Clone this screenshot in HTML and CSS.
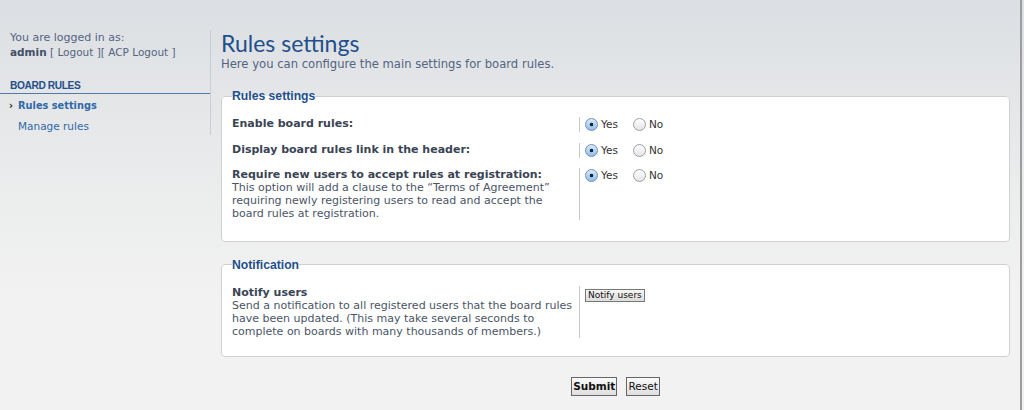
FILE: index.html
```html
<!DOCTYPE html>
<html>

<head>
    <title> Rules settings </title>
    <link rel="stylesheet" href="styles.css">
</head>

<body>
    <div id="pagina">
        <div id="meniu">
            <p class="logat"><span class="prima">You are logged in as:</span><br><b>admin</b> [ <a href="#">Logout</a> ][ <a href="#">ACP Logout</a> ]</p>

            <div class="titluMeniu">BOARD RULES</div>
            <ul class="listaMeniu">
                <li class="activ"><a href="#">Rules settings</a></li>
                <li><a href="#">Manage rules</a></li>
            </ul>
        </div>

        <div id="continut">
            <h1>Rules settings</h1>
            <p class="explicatie">Here you can configure the main settings for board rules.</p>

            <form>
                <fieldset>
                    <legend>Rules settings</legend>
                    <dl>
                        <dt><label>Enable board rules:</label></dt>
                        <dd>
                            <label class="optiune"><input type="radio" name="r1" checked> Yes</label>
                            <label class="optiune"><input type="radio" name="r1"> No</label>
                        </dd>
                    </dl>
                    <dl>
                        <dt><label>Display board rules link in the header:</label></dt>
                        <dd>
                            <label class="optiune"><input type="radio" name="r2" checked> Yes</label>
                            <label class="optiune"><input type="radio" name="r2"> No</label>
                        </dd>
                    </dl>
                    <dl>
                        <dt><label>Require new users to accept rules at registration:</label><br>
                            <span>This option will add a clause to the “Terms of Agreement” requiring newly registering users to read and accept the board rules at registration.</span></dt>
                        <dd>
                            <label class="optiune"><input type="radio" name="r3" checked> Yes</label>
                            <label class="optiune"><input type="radio" name="r3"> No</label>
                        </dd>
                    </dl>
                </fieldset>

                <fieldset class="notificare">
                    <legend>Notification</legend>
                    <dl>
                        <dt><label>Notify users</label><br>
                            <span>Send a notification to all registered users that the board rules have been updated. (This may take several seconds to complete on boards with many thousands of members.)</span></dt>
                        <dd><button type="button" class="butonMic">Notify users</button></dd>
                    </dl>
                </fieldset>

                <div class="trimite">
                    <button type="button" class="buton butonGros">Submit</button>
                    <button type="button" class="buton">Reset</button>
                </div>
            </form>
        </div>
    </div>
</body>

</html>
```

FILE: styles.css
```css
html {
    font-family: "DejaVu Sans", Verdana, sans-serif;
}

body {
    margin: 0px;
    background: linear-gradient(#dcdfe3 0px, #eceded 200px, #f2f2f2 300px);
    height: 410px;
    overflow: hidden;
}

a {
    color: #2f6aa6;
    text-decoration: none;
}

#pagina {
    display: flex;
    width: 1020px;
    height: 410px;
    border-right: 2px solid #9d9d9d;
}

#meniu {
    width: 210px;
    height: 105px;
    margin-top: 30px;
    border-right: 1px solid #c8cdd3;
    font-size: 10.5px;
    color: #536482;
}

.logat {
    margin: 0px 0px 0px 10px;
    line-height: 15px;
}

.logat .prima {
    font-size: 11px;
}

.logat b {
    color: #425067;
}

.logat a {
    color: #536482;
}

.titluMeniu {
    margin-top: 19px;
    padding: 0px 0px 1px 10px;
    font-family: "Liberation Sans", Arial, sans-serif;
    font-weight: bold;
    font-size: 10.2px;
    letter-spacing: -0.4px;
    line-height: 13px;
    color: #1f4f8c;
    border-bottom: 1px solid #4e7bab;
}

.listaMeniu {
    list-style: none;
    margin: 2px 0px 0px 0px;
    padding: 0px;
}

.listaMeniu li {
    padding-left: 18px;
    line-height: 20px;
}

.listaMeniu .activ {
    font-weight: bold;
    font-size: 9.8px;
    position: relative;
}

.listaMeniu .activ::before {
    content: "›";
    position: absolute;
    left: 9px;
    color: #222;
}

#continut {
    flex: 1;
    padding: 30px 10px 0px 10px;
}

h1 {
    margin: 0px;
    font-family: Lato, "Liberation Sans", sans-serif;
    font-size: 23px;
    font-weight: normal;
    line-height: 27px;
    color: #1f4f8c;
}

.explicatie {
    margin: 0px;
    font-size: 11.6px;
    line-height: 14px;
    color: #536482;
}

fieldset {
    margin: 18px 0px 0px 0px;
    padding: 14px 10px 10px 10px;
    background-color: white;
    border: 1px solid #d0d0d0;
    border-radius: 4px;
}

fieldset + fieldset {
    margin-top: 16px;
}

.notificare {
    padding-bottom: 8px;
}

legend {
    padding: 0px;
    font-family: "Liberation Sans", Arial, sans-serif;
    font-weight: bold;
    font-size: 12.2px;
    color: #1f4f8c;
}

dl {
    display: flex;
    margin: 0px 0px 10.5px 0px;
    font-size: 11px;
    line-height: 13px;
}

dt {
    width: 343px;
    padding-right: 4px;
    color: #4a5566;
}

dt label {
    font-weight: bold;
    color: #3a4454;
}

dd {
    margin: 0px;
    padding: 1px 0px 1px 5px;
    border-left: 1px solid #c8c8c8;
    display: flex;
    align-items: flex-start;
}

.optiune {
    display: flex;
    align-items: center;
    margin-right: 15px;
    color: #333;
    font-size: 10.5px;
}

input[type=radio] {
    appearance: none;
    width: 13px;
    height: 13px;
    margin: 0px 3px 0px 0px;
    border: 1px solid #9aa0a8;
    border-radius: 50%;
    background: linear-gradient(#ffffff, #e4e4e4);
}

input[type=radio]:checked {
    border-color: #6f8fb8;
    background: radial-gradient(circle, #1c2633 0px, #1c2633 1.5px, transparent 2.1px), linear-gradient(#d8ebfc, #8fbde8);
}

.butonMic {
    margin: 2px 0px 0px 0px;
    padding: 0px 2px;
    height: 13px;
    font-family: "DejaVu Sans", Verdana, sans-serif;
    font-size: 9px;
    line-height: 11px;
    color: #111;
    background: linear-gradient(#f6f6f6, #dcdcdc);
    border: 1px solid #777;
    border-radius: 0px;
}

.trimite {
    margin-top: 18px;
    text-align: center;
}

.buton {
    height: 19px;
    margin: 0px 2px;
    padding: 0px 1px;
    font-family: "DejaVu Sans", Verdana, sans-serif;
    font-size: 10.5px;
    color: #111;
    background: linear-gradient(#fafafa, #dedede);
    border: 1px solid #666;
    border-radius: 0px;
}

.butonGros {
    font-weight: bold;
}
```
